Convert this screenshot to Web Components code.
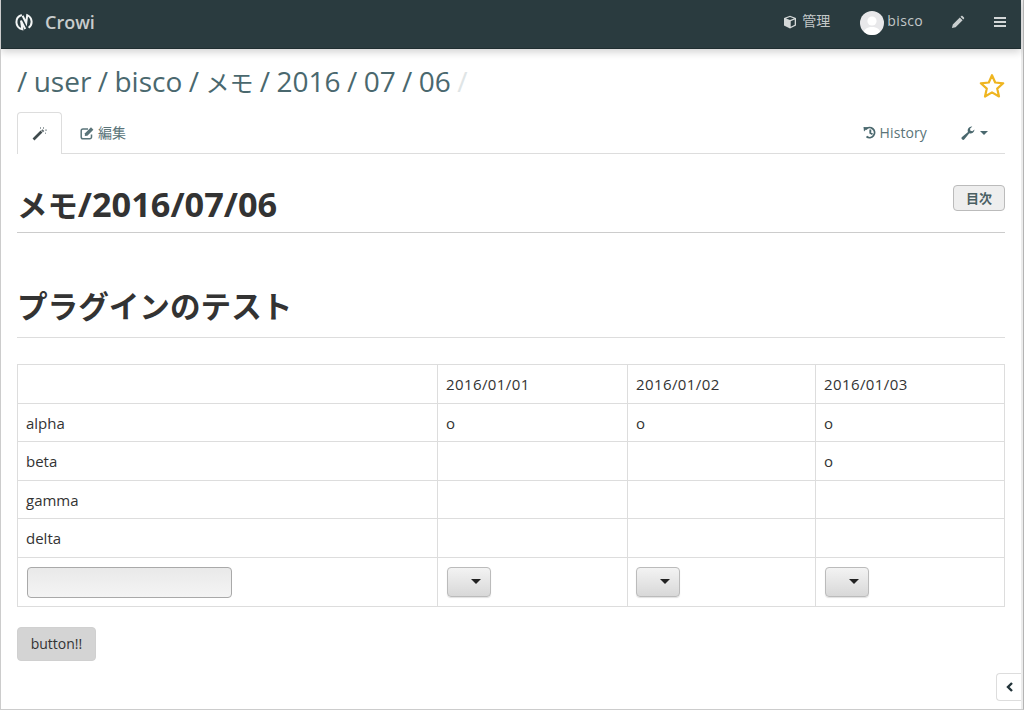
<!DOCTYPE html>
<html lang="ja"><head><meta charset="utf-8"><style>
html,body{margin:0;height:100%;background:#fff}
body{font:14px/20px "Open Sans","Noto Sans CJK JP",sans-serif;color:#333;overflow:hidden}
</style></head><body>
<crowi-app>
<crowi-nav></crowi-nav>
<crowi-crumbs></crowi-crumbs>
<crowi-tabs></crowi-tabs>
<crowi-page></crowi-page>
<crowi-side-toggle></crowi-side-toggle>
</crowi-app>
<script>
const def=(name,html)=>customElements.define(name,class extends HTMLElement{constructor(){super();this.attachShadow({mode:'open'}).innerHTML=html;}});
def('crowi-app',`<style>:host{display:flex;flex-direction:column;position:relative;box-sizing:border-box;width:1024px;height:710px;border-left:1px solid #ccc;border-right:1px solid #b4b4b4;border-bottom:1px solid #ccc;padding-right:2px;overflow:hidden;background:linear-gradient(#ececec,#ececec) right top/2px 100% no-repeat #fff}</style><slot></slot>`);
def('crowi-nav',`<style>
:host{display:flex;align-items:center;height:49px;padding-bottom:5px;box-sizing:border-box;margin-bottom:1px;flex:none;background:#2a3b3f;border-bottom:1px solid #1f2d30;box-shadow:0 3px 8px rgba(0,0,0,.18);color:#ccc;position:relative;z-index:1}
.logo{margin-left:14px;width:18px;height:18px;display:block}
.brand{margin-left:12px;font-size:18px;font-weight:600;color:#c8cccc}
.sp{flex:1}
.i{display:flex;align-items:center;font-size:14px;color:#c3c8c9}
.i b{font-weight:400;margin-bottom:2px}
svg{display:block}
.av{width:24px;height:24px;border-radius:50%;background:#e8e8ea;overflow:hidden;margin:2px 3px 0 0}
</style>
<svg class="logo" viewBox="0 0 18 18" fill="none" stroke="#f4f6f6" stroke-width="2"><path d="M6.800 2A7.300 7.300 0 0 0 7.300 16.200L6 7.600 10.200 16"/><path d="M7.600 2.800 11.200 10 12.200 2.200A7.300 7.300 0 0 1 13.600 14.800"/></svg>
<span class="brand">Crowi</span><span class="sp"></span>
<span class="i" style="margin-right:30px"><svg width="14" height="14" viewBox="0 0 14 14" style="margin-right:5px"><path fill="#d4d8d8" d="M7 .8 13 3v7.400L7 13.400 1 10.400V3zM7 2 3 3.400 7 5l4-1.600zM7.700 6.200v5.600l4-2V4.600z"/></svg><b>管理</b></span>
<span class="i" style="margin-right:28px;letter-spacing:.35px"><span class="av"><svg width="24" height="24" viewBox="0 0 24 24"><circle cx="12" cy="10" r="4.600" fill="#fff"/><path fill="#fff" d="M3.500 24c0-6 3.500-8 8.500-8s8.500 2 8.500 8z"/></svg></span><b>bisco</b></span>
<svg width="14" height="14" viewBox="0 0 14 14" style="margin-right:29px"><path fill="#c9cecf" d="M.9 13.100 1.800 9.400 8.800 2.400 11.600 5.200 4.600 12.200zM9.500 1.700 10.300 1c.4-.3.800-.3 1.200 0l1.500 1.500c.3.400.3.800 0 1.200l-.7.800z"/></svg>
<svg width="12" height="12" viewBox="0 0 12 12" style="margin-right:15px"><path fill="#d3d7d8" d="M0 1h12v2H0zM0 5h12v2H0zM0 9h12v2H0z"/></svg>`);
def('crowi-crumbs',`<style>
:host{display:flex;justify-content:space-between;flex:none;height:62px;padding:0 15px 0 16px;box-sizing:border-box}
h1{margin:0;padding-top:13px;font-size:28px;line-height:37px;font-weight:400;color:#4a686e;white-space:nowrap;word-spacing:-.85px}
.j{font-size:24px}
.f{color:#dfe5e6}
svg{margin:22px 0 0}
</style><h1>/ user / bisco / <span class="j">メモ</span> / 2016 / 07 / 06 <span class="f">/</span></h1>
<svg width="28" height="28" viewBox="0 0 28 28"><path fill="none" stroke="#efb520" stroke-width="2.200" stroke-linejoin="round" d="M14 3.200 17.200 10.500 25.200 11.300 19.200 16.600 21 24.500 14 20.400 7 24.500 8.800 16.600 2.800 11.300 10.800 10.500z"/></svg>`);
def('crowi-tabs',`<style>
:host{display:flex;align-items:stretch;flex:none;height:41px;margin:0 16px;border-bottom:1px solid #ddd;font-size:14px;color:#5a7479}
.t{display:flex;align-items:center}
.a{width:45px;justify-content:center;box-sizing:border-box;height:42px;border:1px solid #ddd;border-bottom:0;border-radius:4px 4px 0 0;background:#fff;margin-right:18px}
.sp{flex:1}
svg{display:block}
.h{letter-spacing:.1px}
</style>
<span class="t a"><svg width="15" height="15" viewBox="0 0 15 15"><path fill="none" stroke="#3f4a4d" stroke-width="2.600" d="M1.500 13.500 9.500 5.500"/><path fill="#9aa3a6" d="M11 1h1v2h-1zM13 3.500h2v1.200H13zM8 1h1v2H8zM13 6.500h1v1.500h-1z"/><path fill="#5e6a6d" d="M10.500 3.200 12.300 5 11 6.300 9.200 4.500z"/></svg></span>
<span class="t"><svg width="15" height="14" viewBox="0 0 15 14" style="margin-right:3px"><path fill="none" stroke="#5a7479" stroke-width="1.500" d="M11.500 8.500V11a1.800 1.800 0 0 1-1.800 1.800H3A1.800 1.800 0 0 1 1.200 11V4.800A1.800 1.800 0 0 1 3 3h5"/><path fill="#5a7479" d="M5 7.300 11 1.300 13.400 3.700 7.400 9.700 4.800 10z"/></svg>編集</span>
<span class="sp"></span>
<span class="t h" style="margin-right:34px"><svg width="14" height="13" viewBox="0 0 14 13" style="margin-right:3px"><path fill="none" stroke="#4a686e" stroke-width="1.900" d="M2.800 3.300A5 5 0 1 1 3.500 10.600M7.300 3.500v3.500l2.200 1.300"/><path fill="#4a686e" d="M.5 1 5.300 1.300 1 5.600z"/></svg>History</span>
<span class="t" style="margin-right:17px"><svg width="14" height="14" viewBox="0 0 14 14" style="margin-right:5px"><path fill="#4a686e" d="M13.500 3.500A4 4 0 0 1 8.300 7.300L3.400 13.300A1.500 1.500 0 0 1 1 11l6-5A4 4 0 0 1 11.300.5L9 2.800l.4 2 2 .5z"/></svg><svg width="8" height="4" viewBox="0 0 8 4"><path fill="#4a686e" d="M0 0h8L4 4z"/></svg></span>`);
def('crowi-heading',`<style>
:host{display:flex;justify-content:space-between;align-items:flex-start;box-sizing:border-box;border-bottom:1px solid var(--rule,#ccc)}
h2{margin:0;font-weight:700;color:#333;font-size:var(--fs,30px);line-height:40px}
</style><h2><slot></slot></h2><slot name="aside"></slot>`);
def('crowi-toc-btn',`<style>
:host{display:block}
span{display:flex;align-items:center;justify-content:center;box-sizing:border-box;width:52px;height:26px;margin-top:1px;border:1px solid #bbb;border-radius:4px;background:#eee;font-size:13px;font-weight:700;color:#4a5f63}
</style><span><slot></slot></span>`);
def('crowi-select',`<style>
:host{box-sizing:border-box;width:44px;height:30px;margin:-2px 0 0 1px;border:1px solid #bbb;border-radius:4px;background:linear-gradient(#f3f3f3,#d8d8d8);display:flex;align-items:center;justify-content:flex-end;padding-right:9px;box-shadow:0 1px 1px rgba(0,0,0,.12)}
i{width:0;height:0;border:5px solid transparent;border-top:5px solid #222;border-bottom:0}
</style><i></i>`);
def('crowi-input',`<style>
:host{display:block;box-sizing:border-box;width:205px;height:31px;margin-left:1px;border:1px solid #a9a9a9;border-radius:4px;background:linear-gradient(#e9e9e9,#f4f4f4)}
</style>`);
def('crowi-page',`<style>
:host{display:block;padding:0 16px;flex:1}
crowi-heading.a{margin-top:22px;height:57px;padding-top:8px;--fs:34.300px}
crowi-heading.b{margin-top:47px;height:58px;--rule:#ddd;--fs:30.600px;padding-top:6px}
.j{font-size:30.400px}
table{border-collapse:collapse;margin-top:26px;width:988px;table-layout:fixed;font-size:15px;color:#333}
td{border:1px solid #ddd;padding:0 8px;vertical-align:middle;box-sizing:border-box}
tr{height:38px}
tr.o{height:39px}
tr.l{height:49px}
tr.l td{padding-top:1px}
.d{letter-spacing:.4px}
.btn{display:inline-flex;align-items:center;justify-content:center;margin-top:20px;box-sizing:border-box;width:79px;height:34px;border-radius:4px;background:#d4d4d4;border:1px solid #d0d0d0;color:#333;font-size:14px}
</style>
<crowi-heading class="a"><span class="j">メモ</span>/2016/07/06<crowi-toc-btn slot="aside">目次</crowi-toc-btn></crowi-heading>
<crowi-heading class="b">プラグインのテスト</crowi-heading>
<table><colgroup><col style="width:420px"><col style="width:190px"><col style="width:188px"><col></colgroup>
<tr class="o"><td></td><td class="d">2016/01/01</td><td class="d">2016/01/02</td><td class="d">2016/01/03</td></tr>
<tr><td>alpha</td><td>o</td><td>o</td><td>o</td></tr>
<tr class="o"><td>beta</td><td></td><td></td><td>o</td></tr>
<tr><td>gamma</td><td></td><td></td><td></td></tr>
<tr class="o"><td>delta</td><td></td><td></td><td></td></tr>
<tr class="l"><td><crowi-input></crowi-input></td><td><crowi-select></crowi-select></td><td><crowi-select style="margin-left:0"></crowi-select></td><td><crowi-select></crowi-select></td></tr>
</table>
<span class="btn">button!!</span>`);
def('crowi-side-toggle',`<style>
:host{position:absolute;right:2px;top:673px;width:25px;height:28px;box-sizing:border-box;border:1px solid #ddd;border-right:0;border-radius:4px 0 0 4px;background:#fff;display:flex;align-items:center;justify-content:center}
</style><svg width="9" height="10" viewBox="0 0 9 10"><path fill="none" stroke="#23343a" stroke-width="2.400" d="M7 1 3 5l4 4"/></svg>`);
</script>
</body></html>
